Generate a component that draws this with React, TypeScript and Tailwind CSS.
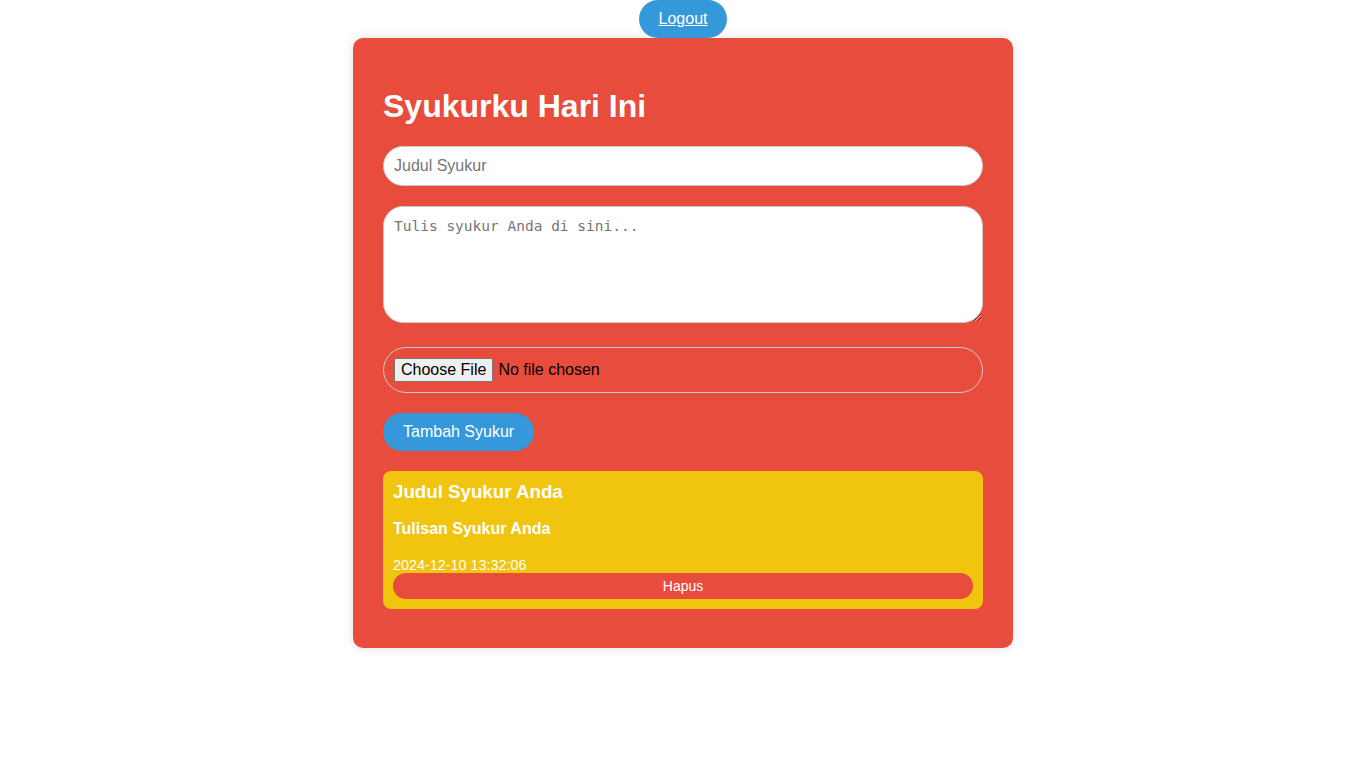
import React from "react"

interface Syukur {
  id: number
  judul: string
  tulisan: string
  waktu: string
}

const entries: Syukur[] = [
  { id: 1, judul: "Judul Syukur Anda", tulisan: "Tulisan Syukur Anda", waktu: "2024-12-10 13:32:06" },
]

export default function App() {
  return (
    <div className="min-h-screen bg-white font-['Liberation_Sans',Arial,sans-serif] text-white">
      {/* Top bar */}
      <div className="flex justify-center">
        <a
          href="#"
          className="block rounded-full bg-[#3498db] px-[20px] py-[10px] text-[16px] leading-[18px] text-white underline"
        >
          Logout
        </a>
      </div>

      {/* Form card */}
      <div className="mx-auto w-[660px] rounded-[10px] bg-[#e74c3c] px-[30px] pt-[30px] pb-[39px] shadow-[0_0_12px_rgba(0,0,0,0.12)]">
        <h1 className="mt-[20px] mb-[21px] text-[32px] font-bold leading-[37px] text-white">Syukurku Hari Ini</h1>

        <input
          type="text"
          placeholder="Judul Syukur"
          className="mb-[20px] block h-[40px] w-full rounded-full border border-[#cccccc] bg-white px-[10px] text-[16px] text-black outline-none placeholder:text-[#757575]"
        />

        <textarea
          placeholder="Tulis syukur Anda di sini..."
          className="mb-[24px] block h-[117px] w-full rounded-[20px] border border-[#cccccc] bg-white p-[10px] font-['DejaVu_Sans_Mono',monospace] text-[14.5px] leading-[19px] text-black outline-none placeholder:text-[#757575]"
        />

        <input
          type="file"
          className="mb-[20px] block h-[46px] w-full rounded-full border border-[#cccccc] px-[10px] py-[10px] text-[16px] leading-[24px] text-black file:mr-[5px] file:rounded-[2px] file:border file:border-[#767676] file:bg-[#efefef] file:px-[6px] file:py-[1px] file:text-[16px] file:leading-[20px] file:text-black"
        />

        <button className="mb-[20px] block rounded-full bg-[#3498db] px-[20px] py-[10px] text-[16px] leading-[18px] text-white">
          Tambah Syukur
        </button>

        {/* Entries */}
        {entries.map((item) => (
          <div key={item.id} className="rounded-[8px] bg-[#f1c40f] p-[10px]">
            <h3 className="text-[18.72px] font-bold leading-[21px]">{item.judul}</h3>
            <p className="mt-[18px] text-[16px] font-bold leading-[18px]">{item.tulisan}</p>
            <p className="mt-[19px] text-[14.4px] leading-[16px]">{item.waktu}</p>
            <button className="block h-[26px] w-full rounded-full bg-[#e74c3c] text-[14px] leading-[16px] text-white">
              Hapus
            </button>
          </div>
        ))}
      </div>
    </div>
  )
}
